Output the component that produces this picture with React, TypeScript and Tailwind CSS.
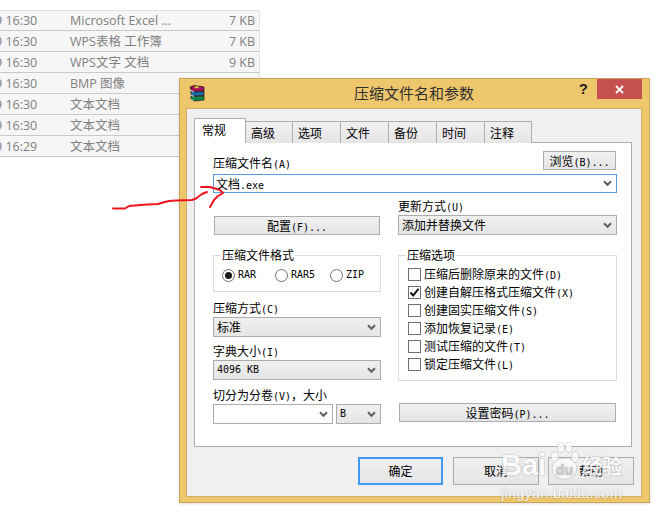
import React from "react";

function T({ s }: { s: string }) {
  const parts = s.split(/([\x20-\x7e]+)/).filter(Boolean);
  return (
    <span className="flex h-[14px] items-baseline text-[12px] leading-[14px] text-black whitespace-pre font-['Noto_Sans_CJK_SC',sans-serif]">
      {parts.map((p, i) =>
        /^[\x20-\x7e]+$/.test(p) ? (
          <span key={i} className="text-[10px] font-['DejaVu_Sans_Mono',monospace]">{p}</span>
        ) : (
          <span key={i}>{p}</span>
        )
      )}
    </span>
  );
}

function Chevron() {
  return (
    <svg width="9" height="7" viewBox="0 0 9 7" className="shrink-0">
      <path d="M1 1.2 L4.5 4.8 L8 1.2" fill="none" stroke="#5f5f5f" strokeWidth="2" />
    </svg>
  );
}

function Select({ s, className }: { s: string; className: string }) {
  return (
    <div className={"flex items-center justify-between border border-[#acacac] bg-linear-to-b from-[#f0f0f0] to-[#e5e5e5] pl-[3px] pr-[4px] " + className}>
      <T s={s} />
      <Chevron />
    </div>
  );
}

function Btn({ s, className }: { s: string; className: string }) {
  return (
    <div className={"flex items-center justify-center border border-[#acacac] bg-linear-to-b from-[#f0f0f0] to-[#e5e5e5] " + className}>
      <T s={s} />
    </div>
  );
}

function Radio({ on, s, className }: { on?: boolean; s: string; className: string }) {
  return (
    <div className={"flex items-center gap-[3px] " + className}>
      <div className="flex h-[13px] w-[13px] items-center justify-center rounded-full border border-[#707070] bg-white">
        {on && <div className="h-[7px] w-[7px] rounded-full bg-[#1a1a1a]" />}
      </div>
      <T s={s} />
    </div>
  );
}

function Check({ on, s }: { on?: boolean; s: string }) {
  return (
    <div className="flex h-[18px] items-center gap-[3px]">
      <div className="flex h-[13px] w-[13px] items-center justify-center border border-[#707070] bg-white">
        {on && (
          <svg width="11" height="11" viewBox="0 0 11 11">
            <path d="M1.5 5.5 L4.2 8.5 L9.5 1.8" fill="none" stroke="#111" strokeWidth="2" />
          </svg>
        )}
      </div>
      <T s={s} />
    </div>
  );
}

const rows = [
  ["16:30", "Microsoft Excel ...", "7 KB"],
  ["16:30", "WPS表格 工作簿", "7 KB"],
  ["16:30", "WPS文字 文档", "9 KB"],
  ["16:30", "BMP 图像", ""],
  ["16:30", "文本文档", ""],
  ["16:30", "文本文档", ""],
  ["16:29", "文本文档", ""],
];

const tabs = [
  ["高级", "w-[47px]"],
  ["选项", "w-[48px]"],
  ["文件", "w-[48px]"],
  ["备份", "w-[48px]"],
  ["时间", "w-[48px]"],
  ["注释", "w-[47px]"],
];

export default function App() {
  return (
    <div className="relative h-[514px] w-[654px] overflow-hidden bg-white">
      {/* file list */}
      <div className="w-[260px] pt-[10px] font-['Open_Sans','Noto_Sans_CJK_SC',sans-serif] text-[12.5px] text-[#808080]">
        {rows.map((r, i) => (
          <div key={i} className="flex h-[21px] items-center justify-between border-b border-r border-b-[#c9c9c9] border-r-[#e2e2e2] bg-[#f6f6f6] pr-[4px] pt-[2px] first:border-t first:border-t-[#e2e2e2]">
            <div className="flex">
              <span className="-ml-[5px] w-[75px] whitespace-pre">{"9 " + r[0]}</span>
              <span className="whitespace-pre">{r[1]}</span>
            </div>
            <span>{r[2]}</span>
          </div>
        ))}
      </div>

      {/* dialog window */}
      <div className="absolute left-[179px] top-[78px] h-[425px] w-[471px] border border-[#c9a458] bg-[#eec66b] shadow-[0_1px_3px_rgba(0,0,0,0.12)]">
        <div className="flex h-[29px] items-start">
          <svg width="17" height="17" viewBox="0 0 17 17" className="ml-[9px] mt-[6px]">
            <path d="M1 2 L5 0.5 L15 2 L15 6 L5 6.5 L2 5 Z" fill="#a8125c" stroke="#111" strokeWidth="0.7" />
            <path d="M5 1.5 L9 1.2 L10 3 L6 3.3 Z" fill="#d8c53a" />
            <path d="M2 6 L5 7 L15 6.5 L15 10.5 L5 11 L2 9.5 Z" fill="#1e6fb0" stroke="#111" strokeWidth="0.7" />
            <path d="M2 10.5 L5 11.5 L15 11 L15 15 L5 16 L2 14.5 Z" fill="#0f8a4a" stroke="#111" strokeWidth="0.7" />
            <path d="M2 5 L5 6.5 L5 7.5 L2 6 Z M2 9.5 L5 11 L5 12 L2 10.5 Z M2 14 L5 15.5 L5 16 L2 15 Z" fill="#eee" />
          </svg>
          <span className="ml-[148px] mt-[4px] whitespace-pre font-['Noto_Sans_CJK_SC',sans-serif] text-[15px] leading-[20px] text-[#2f2f2f]">压缩文件名和参数</span>
          <div className="flex-1" />
          <span className="mr-[9px] mt-[1px] font-['Liberation_Sans',sans-serif] text-[15px] font-bold leading-[18px] text-[#222]">?</span>
          <div className="mr-[7px] flex h-[20px] w-[45px] items-center justify-center bg-[#c75050]">
            <svg width="9" height="9" viewBox="0 0 9 9">
              <path d="M1 1 L8 8 M8 1 L1 8" stroke="#fff" strokeWidth="1.8" />
            </svg>
          </div>
        </div>

        {/* client area */}
        <div className="ml-[6px] h-[389px] w-[456px] border border-[#cfae68] bg-[#f0f0f0] pl-[7px] pt-[9px]">
          <div className="relative z-10 -mb-px flex h-[25px] items-end">
            <div className="flex h-[25px] w-[52px] items-center border border-b-0 border-[#acacac] bg-white pb-[2px] pl-[7px]">
              <T s="常规" />
            </div>
            {tabs.map(([s, w]) => (
              <div key={s} className={"flex h-[22px] items-center border border-l-0 border-b-0 border-[#acacac] bg-linear-to-b from-[#f0f0f0] to-[#e5e5e5] pl-[5px] " + w}>
                <T s={s} />
              </div>
            ))}
          </div>

          <div className="h-[305px] w-[438px] border border-[#acacac] bg-white pl-[18px] pt-[8px]">
            <div className="flex h-[19px] w-[403px] items-end justify-between">
              <T s="压缩文件名(A)" />
              <Btn s="浏览(B)..." className="h-[19px] w-[73px]" />
            </div>
            <div className="mt-[4px] flex h-[19px] w-[404px] items-center justify-between border border-[#569de5] bg-white pl-[2px] pr-[4px]">
              <T s="文档.exe" />
              <Chevron />
            </div>

            <div className="mt-[6px] flex gap-[17px]">
              <div className="w-[168px]">
                <Btn s="配置(F)..." className="ml-[1px] mt-[17px] h-[19px] w-[166px]" />
                <div className="mt-[20px] h-[37px] border border-[#dcdcdc] pl-[8px]">
                  <div className="-ml-px -mt-[8px] w-fit bg-white px-px"><T s="压缩文件格式" /></div>
                  <div className="mt-[6px] flex">
                    <Radio on s="RAR" className="w-[53px]" />
                    <Radio s="RAR5" className="w-[55px]" />
                    <Radio s="ZIP" className="w-[50px]" />
                  </div>
                </div>
                <div className="mt-[9px] h-[14px]"><T s="压缩方式(C)" /></div>
                <Select s="标准" className="mt-[2px] h-[20px]" />
                <div className="mt-[7px] h-[14px]"><T s="字典大小(I)" /></div>
                <Select s="4096 KB" className="mt-[2px] h-[20px]" />
                <div className="mt-[8px] h-[14px]"><T s="切分为分卷(V)，大小" /></div>
                <div className="mt-[2px] flex justify-between">
                  <div className="flex h-[20px] w-[120px] items-center justify-end border border-[#acacac] bg-white pr-[4px]">
                    <Chevron />
                  </div>
                  <Select s="B" className="h-[20px] w-[45px]" />
                </div>
              </div>

              <div className="w-[219px]">
                <div className="h-[14px]"><T s="更新方式(U)" /></div>
                <Select s="添加并替换文件" className="mt-[2px] h-[20px]" />
                <div className="mt-[20px] h-[126px] border border-[#dcdcdc] pl-[9px]">
                  <div className="-ml-[2px] -mt-[8px] w-fit bg-white px-px"><T s="压缩选项" /></div>
                  <div className="mt-[3px]">
                    <Check s="压缩后删除原来的文件(D)" />
                    <Check on s="创建自解压格式压缩文件(X)" />
                    <Check s="创建固实压缩文件(S)" />
                    <Check s="添加恢复记录(E)" />
                    <Check s="测试压缩的文件(T)" />
                    <Check s="锁定压缩文件(L)" />
                  </div>
                </div>
                <Btn s="设置密码(P)..." className="ml-px mt-[22px] h-[19px] w-[217px]" />
              </div>
            </div>
          </div>

          <div className="mt-[10px] flex w-[440px] justify-end gap-[10px]">
            <div className="flex h-[28px] w-[85px] items-center justify-center border-2 border-[#3f9bf0] bg-linear-to-b from-[#f0f0f0] to-[#e5e5e5]">
              <T s="确定" />
            </div>
            <Btn s="取消" className="h-[28px] w-[86px]" />
            <Btn s="帮助" className="-ml-px h-[28px] w-[86px]" />
          </div>
        </div>
      </div>

      {/* red annotation */}
      <svg width="654" height="514" viewBox="0 0 654 514" className="pointer-events-none absolute left-0 top-0">
        <path
          d="M113 208.5 L125 208.5 L129 206 L147 204.5 L158 204 L163 202.5 L169 201 L176 200.5 L192 200 L196 198.5 L202 194 L207 192"
          fill="none" stroke="#f0141e" strokeWidth="2" strokeLinecap="round" strokeLinejoin="round"
        />
        <path
          d="M201 187 L210 187 L220 190 L223 193 L218 196 L214 200 L210 207"
          fill="none" stroke="#f0141e" strokeWidth="2" strokeLinecap="round" strokeLinejoin="round"
        />
      </svg>

      {/* watermark */}
      <div className="pointer-events-none absolute left-[501px] top-[442px] w-[125px] text-white opacity-80 [text-shadow:0_0_2px_rgba(110,110,110,0.7)]">
        <div className="flex h-[39px] items-end">
          <span className="font-['Liberation_Sans',sans-serif] text-[29px] font-bold leading-[32px]">Bai</span>
          <svg width="35" height="39" viewBox="0 0 36 44" className="ml-[1px] shrink-0">
            <g fill="#fff" fillOpacity="0.85" stroke="#a8a8a8" strokeWidth="0.6">
              <ellipse cx="7" cy="17" rx="4" ry="6" />
              <ellipse cx="14" cy="6" rx="4" ry="6" />
              <ellipse cx="23" cy="6" rx="4" ry="6" />
              <ellipse cx="30" cy="17" rx="4" ry="6" />
              <ellipse cx="18" cy="30" rx="14" ry="12" />
            </g>
            <text x="18" y="37" textAnchor="middle" fontFamily="Liberation Sans" fontSize="16" fontWeight="700" fill="#c4c4c4">du</text>
          </svg>
          <span className="whitespace-pre font-['Noto_Sans_CJK_SC',sans-serif] text-[20px] font-bold leading-[30px]">经验</span>
        </div>
        <div className="mt-[4px] whitespace-pre font-['Liberation_Sans',sans-serif] text-[15px] leading-[16px]">jingyan.baidu.com</div>
      </div>
    </div>
  );
}
